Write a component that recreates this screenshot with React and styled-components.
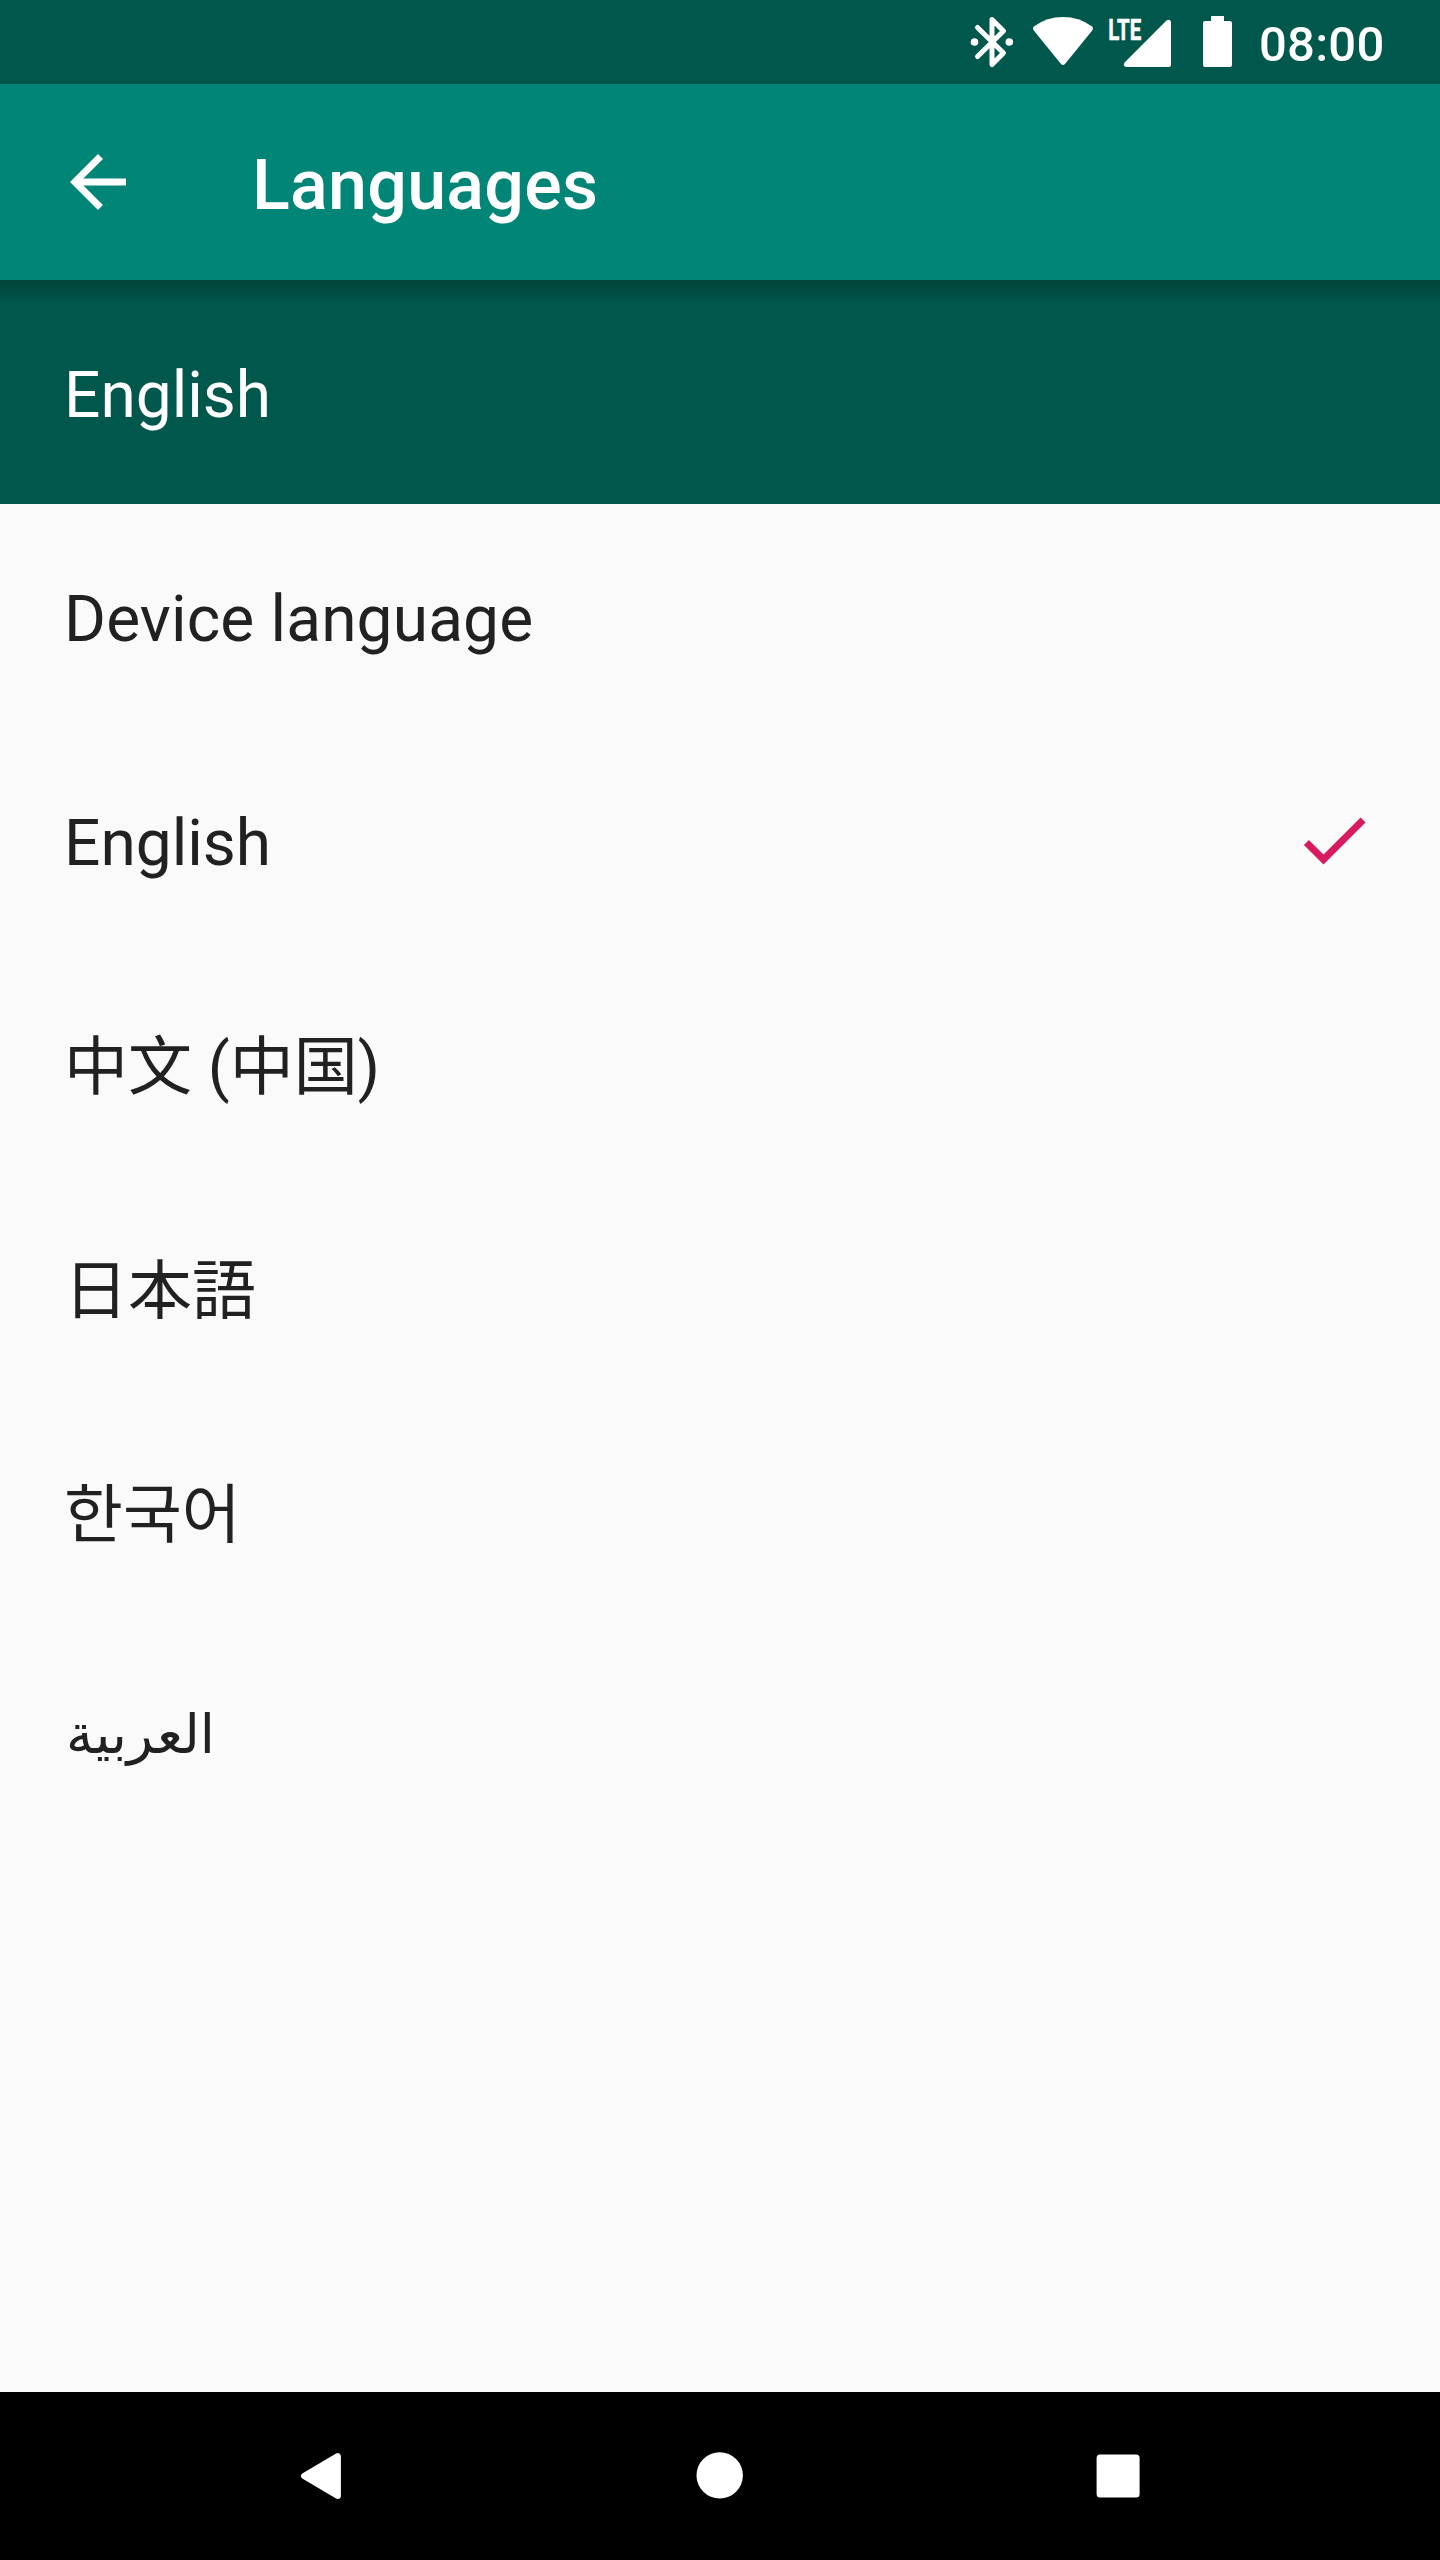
import React from 'react';
import styled, { createGlobalStyle } from 'styled-components';

const GlobalStyle = createGlobalStyle`
  *, *::before, *::after { box-sizing: border-box; }
  body { margin: 0; background: #fafafa; }
`;

const Screen = styled.div`
  display: flex;
  flex-direction: column;
  width: 1440px;
  height: 2560px;
  overflow: hidden;
  background: #fafafa;
  color: #212121;
  font-family: Roboto, 'Noto Sans CJK SC', 'DejaVu Sans', sans-serif;
`;

const StatusBar = styled.header`
  display: flex;
  flex: none;
  justify-content: flex-end;
  height: 84px;
  padding-right: 56px;
  background: #00574b;
  color: #fff;
`;

const StatusIcon = styled.svg`
  flex: none;
  width: ${(p) => p.$width}px;
  height: 84px;
  fill: currentColor;
`;

const Clock = styled.time`
  flex: none;
  width: 125px;
  margin-left: 23px;
  padding-top: 16px;
  font-size: 49px;
  font-weight: 500;
  letter-spacing: 0.25px;
  line-height: 58px;
  white-space: nowrap;
`;

const Toolbar = styled.div`
  display: flex;
  flex: none;
  align-items: center;
  height: 196px;
  padding: 0 56px;
  gap: 112px;
  background: #008577;
  color: #fff;
`;

const IconButton = styled.button`
  display: flex;
  padding: 0;
  border: 0;
  background: none;
  color: inherit;
`;

const Glyph = styled.svg`
  flex: none;
  width: 84px;
  height: 84px;
  fill: ${(p) => p.$color || 'currentColor'};
`;

const Title = styled.h1`
  margin: 0;
  padding-top: 6px;
  font-size: 70px;
  font-weight: 500;
  letter-spacing: 0.25px;
  line-height: 82px;
`;

const Row = styled.li`
  display: flex;
  flex: none;
  align-items: center;
  justify-content: space-between;
  height: 224px;
  padding: 0 64px;
`;

const CurrentLanguage = styled(Row).attrs({ as: 'div' })`
  background: linear-gradient(#00443a, #00574b 24px);
  color: #fff;
`;

const Label = styled.span`
  margin-top: ${(p) => p.$shift ?? 7}px;
  padding-left: ${(p) => p.$indent || 0}px;
  font-family: Roboto, ${(p) => p.$face || "'Noto Sans CJK SC'"}, sans-serif;
  font-size: ${(p) => p.$size || 64}px;
  letter-spacing: ${(p) => p.$tracking || 0}px;
  line-height: 76px;
`;

const List = styled.ul`
  flex: 1;
  margin: 0;
  padding: 0;
  list-style: none;
`;

const NavBar = styled.nav`
  display: flex;
  flex: none;
  align-items: center;
  justify-content: center;
  gap: 315px;
  height: 168px;
  background: #000;
`;

const NavButton = styled(IconButton)`
  color: #fff;
`;

const languages = [
  { name: 'Device language', lang: 'en', tracking: 0.15 },
  { name: 'English', lang: 'en', selected: true },
  { name: '中文 (中国)', lang: 'zh-CN', face: "'Noto Sans CJK SC'" },
  { name: '日本語', lang: 'ja', face: "'Noto Sans CJK JP'" },
  { name: '한국어', lang: 'ko', face: "'Noto Sans CJK KR'" },
  { name: 'العربية', lang: 'ar', face: "'DejaVu Sans'", size: 54.5, shift: -4, indent: 2 },
];

function StatusIcons() {
  return (
    <>
      <StatusIcon $width={46} viewBox="969 0 46 84" aria-label="Bluetooth">
        <path
          d="M977.5 27.5 L1003.5 53 L992 64.5 V19.5 L1003.5 31 L977.5 56.5"
          fill="none"
          stroke="currentColor"
          strokeWidth="5"
          strokeLinecap="round"
          strokeLinejoin="round"
        />
        <circle cx="974.5" cy="42" r="3.8" />
        <circle cx="1009.3" cy="42" r="3.8" />
      </StatusIcon>
      <StatusIcon $width={90} viewBox="1015 0 90 84" aria-label="Wi-Fi">
        <path d="M1034.3 26.2 Q1047 17 1063 17 Q1079 17 1091.7 26.2 Q1094 28 1092.2 30.5 L1065.2 63.8 Q1063 66.2 1060.8 63.8 L1033.8 30.5 Q1032 28 1034.3 26.2 Z" />
      </StatusIcon>
      <StatusIcon $width={75} viewBox="1105 0 75 84" aria-label="LTE signal">
        <text
          x="1108.3"
          y="39.6"
          fontSize="30"
          fontWeight="700"
          textLength="33"
          lengthAdjust="spacingAndGlyphs"
          stroke="currentColor"
          strokeWidth="0.5"
        >
          LTE
        </text>
        <path d="M1171 22 V64.5 Q1171 67 1168.5 67 H1126 Q1122.5 66 1124.6 62.5 L1166.5 20.6 Q1170 18.6 1171 22 Z" />
      </StatusIcon>
      <StatusIcon $width={56} viewBox="1180 0 56 84" aria-label="Battery">
        <path d="M1211 16 H1224 V21 H1230 Q1232 21 1232 23 V65 Q1232 67 1230 67 H1205 Q1203 67 1203 65 V23 Q1203 21 1205 21 H1211 Z" />
      </StatusIcon>
    </>
  );
}

export default function App() {
  return (
    <Screen>
      <GlobalStyle />
      <StatusBar>
        <StatusIcons />
        <Clock>08:00</Clock>
      </StatusBar>
      <Toolbar>
        <IconButton aria-label="Back">
          <Glyph viewBox="0 0 24 24">
            <path d="M20 11H7.83l5.59-5.59L12 4l-8 8 8 8 1.41-1.41L7.83 13H20v-2z" />
          </Glyph>
        </IconButton>
        <Title>Languages</Title>
      </Toolbar>
      <CurrentLanguage>
        <Label>English</Label>
      </CurrentLanguage>
      <List>
        {languages.map((item) => (
          <Row key={item.name}>
            <Label
              lang={item.lang}
              $face={item.face}
              $size={item.size}
              $shift={item.shift}
              $indent={item.indent}
              $tracking={item.tracking}
            >
              {item.name}
            </Label>
            {item.selected && (
              <Glyph viewBox="0 0 24 24" $color="#d81b60">
                <path d="M9 16.17L4.83 12l-1.42 1.41L9 19 21 7l-1.41-1.41z" />
              </Glyph>
            )}
          </Row>
        ))}
      </List>
      <NavBar>
        <NavButton aria-label="Back">
          <Glyph viewBox="279 2434 84 84">
            <path
              d="M304.3 2476 L337.7 2456.3 V2495.7 Z"
              stroke="currentColor"
              strokeWidth="6.4"
              strokeLinejoin="round"
            />
          </Glyph>
        </NavButton>
        <NavButton aria-label="Home">
          <Glyph viewBox="678 2434 84 84">
            <circle cx="719.7" cy="2475.4" r="23.2" />
          </Glyph>
        </NavButton>
        <NavButton aria-label="Recent apps">
          <Glyph viewBox="1077 2434 84 84">
            <rect x="1096.6" y="2454.4" width="43" height="43" rx="3.5" />
          </Glyph>
        </NavButton>
      </NavBar>
    </Screen>
  );
}
